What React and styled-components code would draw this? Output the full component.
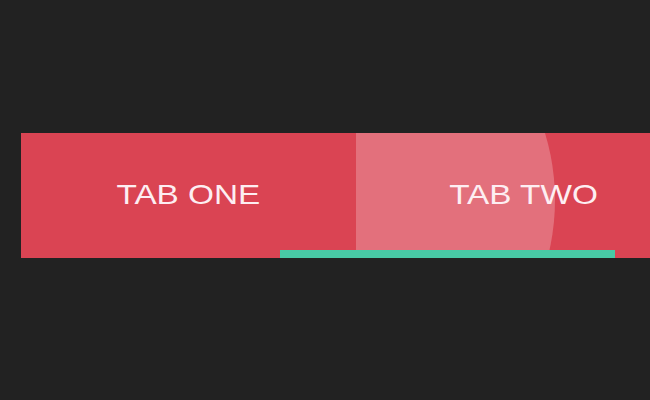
import React from "react";
import styled, { createGlobalStyle } from "styled-components";

const GlobalStyle = createGlobalStyle`
  html, body {
    margin: 0;
    padding: 0;
    background: #222222;
    overflow: hidden;
  }
  body {
    width: 650px;
    height: 400px;
    font-family: "Liberation Sans", Arial, sans-serif;
  }
`;

const Stage = styled.div`
  padding: 133px 0 0 21px;
`;

const TabBar = styled.div`
  position: relative;
  display: flex;
  width: 629px;
  height: 125px;
  background: #da4453;
  overflow: hidden;
`;

const Tab = styled.button`
  position: relative;
  flex: 0 0 335px;
  display: flex;
  align-items: center;
  justify-content: center;
  padding: 0 0 2px;
  border: 0;
  background: transparent;
  overflow: hidden;
  cursor: pointer;
  font-family: "Liberation Sans", Arial, sans-serif;
  font-size: 28px;
  color: #fdeef2;
`;

const Label = styled.span`
  position: relative;
  display: inline-block;
  transform: scaleX(1.19);
`;

const Ripple = styled.span`
  position: absolute;
  left: ${(p) => p.$x - p.$r}px;
  top: ${(p) => p.$y - p.$r}px;
  width: ${(p) => p.$r * 2}px;
  height: ${(p) => p.$r * 2}px;
  border-radius: 50%;
  background: rgba(255, 255, 255, 0.24);
`;

const Indicator = styled.div`
  position: absolute;
  left: ${(p) => p.$left}px;
  bottom: 0;
  width: 335px;
  height: 8px;
  background: #48c9a5;
`;

const tabs = [
  { id: "one", label: "TAB ONE" },
  { id: "two", label: "TAB TWO", ripple: { x: -30, y: 67, r: 229 } },
];

export default function App() {
  return (
    <>
      <GlobalStyle />
      <Stage>
        <TabBar>
          {tabs.map((t) => (
            <Tab key={t.id}>
              {t.ripple && <Ripple $x={t.ripple.x} $y={t.ripple.y} $r={t.ripple.r} />}
              <Label>{t.label}</Label>
            </Tab>
          ))}
          <Indicator $left={259} />
        </TabBar>
      </Stage>
    </>
  );
}
